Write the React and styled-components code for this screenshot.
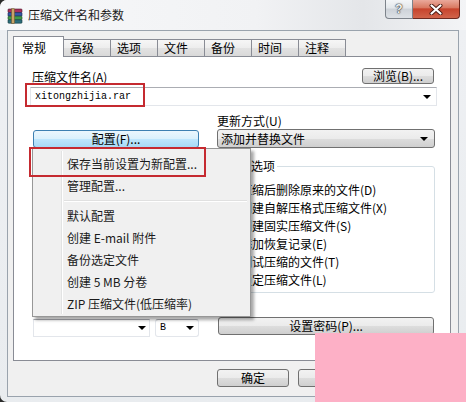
import React from 'react';
import styled, { createGlobalStyle } from 'styled-components';

const GlobalStyle = createGlobalStyle`
  html, body {
    margin: 0;
    padding: 0;
  }
  body {
    background: #2b2b2b;
    font-family: "Noto Sans CJK SC", "Liberation Sans", sans-serif;
    font-size: 12px;
    color: #000;
  }
  * { box-sizing: border-box; }
`;

const Window = styled.div`
  position: relative;
  width: 466px;
  height: 402px;
  overflow: hidden;
  display: flex;
  flex-direction: column;
  background: linear-gradient(to bottom, #fafbfc 0px, #eef0f3 30px, #e9ecef 100%);
  border-radius: 7px 0 0 7px;
`;

const TitleBar = styled.div`
  height: 30px;
  flex-shrink: 0;
  display: flex;
  align-items: flex-start;
  padding-left: 7px;
  background: linear-gradient(to right, #f7f8fa 0%, #f1f2f4 55%, #e4e6e9 78%, #f3f4f6 100%);
`;

const AppIcon = styled.svg`
  margin-top: 8px;
  flex-shrink: 0;
`;

const Caption = styled.div`
  margin: 7px 0 0 5px;
  line-height: 16px;
  font-size: 12px;
  color: #1b1b1b;
`;

const CaptionButtons = styled.div`
  margin-left: auto;
  margin-right: 6px;
  display: flex;
`;

const HelpButton = styled.div`
  width: 28px;
  height: 19px;
  border: 1px solid #7d838b;
  border-top: none;
  border-radius: 0 0 0 4px;
  background: linear-gradient(#f4f6f8 0%, #e3e7eb 45%, #cdd2d8 50%, #dde1e6 100%);
  display: flex;
  align-items: center;
  justify-content: center;
  font-family: "Liberation Sans", sans-serif;
  font-weight: bold;
  font-size: 12px;
  color: #f4f4f4;
  text-shadow: 0 0 1px #333, 0 0 1px #333, 0 0 2px #555;
`;

const CloseButton = styled.div`
  width: 47px;
  height: 19px;
  border: 1px solid #6e2a20;
  border-top: none;
  border-left: none;
  border-radius: 0 0 4px 0;
  background: linear-gradient(#eaa99b 0%, #d97a63 42%, #c7442d 50%, #d1644a 100%);
  display: flex;
  align-items: center;
  justify-content: center;
`;

const Body = styled.div`
  flex: 1;
  margin: 0 7px 5px;
  border: 1px solid #9aa3ad;
  background: #f0f0f0;
  padding: 5px 7px 0 5px;
  display: flex;
  flex-direction: column;
`;

const TabStrip = styled.div`
  height: 20px;
  flex-shrink: 0;
  display: flex;
  align-items: flex-end;
`;

const Tab = styled.div`
  position: relative;
  z-index: ${p => (p.$active ? 2 : 1)};
  height: ${p => (p.$active ? 21 : 17)}px;
  margin-bottom: ${p => (p.$active ? -1 : 0)}px;
  padding: ${p => (p.$active ? '3px 17px 0 8px' : '0 16px 0 6px')};
  border: 1px solid #898c95;
  border-bottom: none;
  border-left-width: ${p => (p.$active ? 1 : 0)}px;
  background: ${p =>
    p.$active ? '#fff' : 'linear-gradient(#f6f6f6 0%, #ededed 50%, #e2e2e2 51%, #d9d9d9 100%)'};
  line-height: 16px;
  font-size: 12px;
  white-space: nowrap;
`;

const Panel = styled.div`
  height: 305px;
  flex-shrink: 0;
  border: 1px solid #898c95;
  background: #fff;
  padding: 11px 13px 23px 16px;
  display: flex;
  flex-direction: column;
`;

const TopRow = styled.div`
  height: 16px;
  display: flex;
  align-items: flex-end;
  justify-content: space-between;
`;

const Label = styled.div`
  line-height: 14px;
  font-size: 12px;
  margin-left: ${p => p.$indent || 0}px;
  margin-top: ${p => p.$top || 0}px;
  white-space: nowrap;
`;

const Button = styled.button`
  flex-shrink: 0;
  width: ${p => p.$w}px;
  height: ${p => p.$h || 18}px;
  margin: ${p => p.$m || 0};
  padding: 0;
  border: 1px solid ${p => (p.$hot ? '#3c7fb1' : '#707070')};
  border-radius: 3px;
  background: ${p =>
    p.$hot
      ? 'linear-gradient(#eaf6fd 0%, #d9f0fc 50%, #bee6fd 51%, #a7d9f5 100%)'
      : 'linear-gradient(#f2f2f2 0%, #ebebeb 50%, #dddddd 51%, #cfcfcf 100%)'};
  font-family: inherit;
  font-size: 12px;
  line-height: 14px;
  color: #000;
`;

const Arrow = styled.span`
  width: 0;
  height: 0;
  border-left: 4px solid transparent;
  border-right: 4px solid transparent;
  border-top: 4px solid #000;
  flex-shrink: 0;
`;

const EditCombo = styled.div`
  width: ${p => (p.$w ? `${p.$w}px` : 'auto')};
  height: ${p => p.$h || 19}px;
  margin-top: ${p => p.$top || 0}px;
  display: flex;
  align-items: center;
  justify-content: space-between;
  padding: 0 ${p => p.$pr || 5}px 0 4px;
  border: 1px solid #e3e6eb;
  border-top-color: #abadb3;
  background: #fff;
  border-radius: ${p => (p.$round ? 3 : 0)}px;
`;

const MonoText = styled.span`
  font-family: "Liberation Mono", monospace;
  font-size: 10px;
  line-height: 14px;
`;

const ListCombo = styled.div`
  height: 19px;
  margin-top: 1px;
  display: flex;
  align-items: center;
  justify-content: space-between;
  padding: 0 6px 0 3px;
  border: 1px solid #707070;
  border-radius: 3px;
  background: linear-gradient(#f2f2f2 0%, #ebebeb 50%, #dddddd 51%, #cfcfcf 100%);
  line-height: 14px;
`;

const Columns = styled.div`
  flex: 1;
  margin-top: 7px;
  padding-left: 3px;
  display: grid;
  grid-template-columns: 166px 218px;
  column-gap: 18px;
`;

const Column = styled.div`
  display: flex;
  flex-direction: column;
`;

const Group = styled.fieldset`
  margin: ${p => p.$top || 0}px 0 0;
  padding: 7px 0 4px;
  border: 1px solid #d5dfe5;
  border-radius: 3px;
  min-width: 0;
`;

const Legend = styled.legend`
  margin-left: 7px;
  padding: 0 2px;
  line-height: 14px;
  font-size: 12px;
`;

const CheckRow = styled.div`
  height: 18px;
  display: flex;
  align-items: center;
  padding-left: 6px;
  gap: 3px;
  white-space: nowrap;
`;

const Box = styled.span`
  width: 13px;
  height: 13px;
  flex-shrink: 0;
  border: 1px solid #8e8f8f;
  background: linear-gradient(135deg, #dcdcdc, #fff);
`;

const BottomRow = styled.div`
  margin-top: auto;
  display: flex;
  gap: 5px;
`;

const Footer = styled.div`
  margin-top: 8px;
  display: flex;
  justify-content: flex-end;
  gap: 9px;
`;

const Menu = styled.div`
  position: absolute;
  z-index: 5;
  left: 32px;
  top: 148px;
  width: 219px;
  height: 169px;
  padding: 4px 2px 1px;
  border: 1px solid #979797;
  background: #f0f0f0;
  box-shadow: 3px 3px 3px rgba(0, 0, 0, 0.35);
  &::before {
    content: '';
    position: absolute;
    top: 2px;
    bottom: 2px;
    left: 28px;
    width: 1px;
    background: #e2e3e3;
    border-right: 1px solid #fff;
  }
`;

const MenuItem = styled.div`
  height: 22px;
  line-height: 22px;
  padding-left: 32px;
  font-size: 12px;
  color: #1a1a1a;
  white-space: nowrap;
`;

const MenuSeparator = styled.div`
  position: relative;
  height: 8px;
  margin-left: 29px;
  &::after {
    content: '';
    position: absolute;
    left: 0;
    right: 1px;
    top: 3px;
    height: 1px;
    background: #e0e0e0;
    border-bottom: 1px solid #fff;
  }
`;

const Highlight = styled.div`
  position: absolute;
  z-index: 6;
  border: 2px solid #c52a30;
  pointer-events: none;
`;

const Sticker = styled.div`
  position: absolute;
  z-index: 7;
  left: 315px;
  top: 333px;
  right: 0;
  bottom: 0;
  background: #fdb0c6;
`;

const tabs = ['常规', '高级', '选项', '文件', '备份', '时间', '注释'];

const options = [
  '压缩后删除原来的文件(D)',
  '创建自解压格式压缩文件(X)',
  '创建固实压缩文件(S)',
  '添加恢复记录(E)',
  '测试压缩的文件(T)',
  '锁定压缩文件(L)',
];

const menuTop = ['保存当前设置为新配置...', '管理配置...'];
const menuBottom = ['默认配置', '创建 E-mail 附件', '备份选定文件', '创建 5 MB 分卷', 'ZIP 压缩文件(低压缩率)'];

function RarIcon() {
  return (
    <AppIcon width="16" height="16" viewBox="0 0 16 16">
      <rect x="1" y="1" width="14" height="3.6" rx="0.8" fill="#a8305a" stroke="#4a1326" strokeWidth="0.6" />
      <rect x="1" y="4.6" width="14" height="3.6" rx="0.8" fill="#3558a8" stroke="#15254f" strokeWidth="0.6" />
      <rect x="1" y="8.2" width="14" height="3.6" rx="0.8" fill="#3f9b47" stroke="#17441b" strokeWidth="0.6" />
      <rect x="1" y="11.8" width="14" height="3.4" rx="0.8" fill="#2d6f7c" stroke="#12343a" strokeWidth="0.6" />
      <rect x="4.5" y="0.8" width="3" height="14.6" fill="#c8a468" stroke="#6b4f22" strokeWidth="0.5" />
    </AppIcon>
  );
}

export default function App() {
  return (
    <>
      <GlobalStyle />
      <Window>
        <TitleBar>
          <RarIcon />
          <Caption>压缩文件名和参数</Caption>
          <CaptionButtons>
            <HelpButton>?</HelpButton>
            <CloseButton>
              <svg width="14" height="11" viewBox="0 0 14 11">
                <path d="M2.5 1.5 L11.5 9.5 M11.5 1.5 L2.5 9.5" stroke="#4a1a12" strokeWidth="4" strokeLinecap="round" />
                <path d="M2.5 1.5 L11.5 9.5 M11.5 1.5 L2.5 9.5" stroke="#fff" strokeWidth="2.2" strokeLinecap="round" />
              </svg>
            </CloseButton>
          </CaptionButtons>
        </TitleBar>

        <Body>
          <TabStrip>
            {tabs.map((t, i) => (
              <Tab key={t} $active={i === 0}>{t}</Tab>
            ))}
          </TabStrip>

          <Panel>
            <TopRow>
              <Label $indent={2}>压缩文件名(A)</Label>
              <Button $w={72} $h={16} $m="0 3px 0 0">浏览(B)...</Button>
            </TopRow>
            <EditCombo $top={3}>
              <MonoText>xitongzhijia.rar</MonoText>
              <Arrow />
            </EditCombo>

            <Columns>
              <Column>
                <Button $w={166} $hot $m="17px 0 0">配置(F)...</Button>
                <BottomRow>
                  <EditCombo $w={117} $h={18} $pr={3}>
                    <span />
                    <Arrow />
                  </EditCombo>
                  <EditCombo $w={44} $h={18} $pr={4} $round>
                    <MonoText>B</MonoText>
                    <Arrow />
                  </EditCombo>
                </BottomRow>
              </Column>

              <Column>
                <Label $top={1}>更新方式(U)</Label>
                <ListCombo>添加并替换文件<Arrow /></ListCombo>
                <Group $top={11}>
                  <Legend>压缩选项</Legend>
                  {options.map(o => (
                    <CheckRow key={o}>
                      <Box />
                      {o}
                    </CheckRow>
                  ))}
                </Group>
                <Button $w={216} $m="auto 0 2px 1px">设置密码(P)...</Button>
              </Column>
            </Columns>
          </Panel>

          <Footer>
            <Button $w={72}>确定</Button>
            <Button $w={72}>取消</Button>
            <Button $w={72}>帮助</Button>
          </Footer>
        </Body>

        <Menu>
          {menuTop.map(m => <MenuItem key={m}>{m}</MenuItem>)}
          <MenuSeparator />
          {menuBottom.map(m => <MenuItem key={m}>{m}</MenuItem>)}
        </Menu>

        <Highlight style={{ left: 25, top: 83, width: 120, height: 24 }} />
        <Highlight style={{ left: 29, top: 147, width: 177, height: 30 }} />
        <Sticker />
      </Window>
    </>
  );
}
